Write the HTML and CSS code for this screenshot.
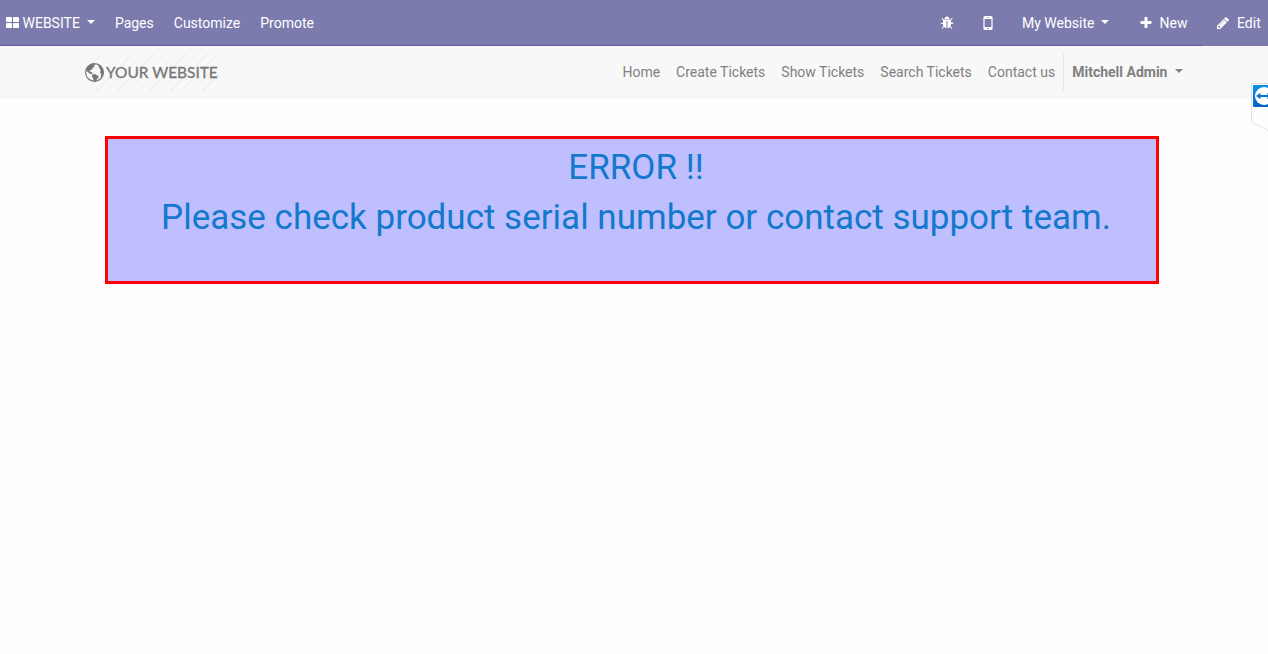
FILE: index.html
```html
<!DOCTYPE html>
<html lang="en">
<head>
<meta charset="utf-8">
<title>Your Website</title>
<link rel="stylesheet" href="styles.css">
</head>
<body>
<nav class="topbar">
  <ul class="menu">
    <li class="menu-item brand"><svg class="icon-grid" viewBox="0 0 13 11"><rect width="6" height="5" rx=".8"/><rect x="7" width="6" height="5" rx=".8"/><rect y="6" width="6" height="5" rx=".8"/><rect x="7" y="6" width="6" height="5" rx=".8"/></svg>WEBSITE <span class="caret"></span></li>
    <li class="menu-item">Pages</li>
    <li class="menu-item">Customize</li>
    <li class="menu-item">Promote</li>
  </ul>
  <ul class="menu tools">
    <li class="menu-item bug"><svg class="icon" viewBox="0 0 1792 1792"><path d="M1696 960q0 26-19 45t-45 19h-224q0 171-67 290l208 209q19 19 19 45t-19 45q-18 19-45 19t-45-19l-198-197q-5 5-15 13t-42 28.500-65 36.500-82 29-97 13V640H832v896q-51 0-101.500-13.500t-87-33-66-39-43.500-32.500l-15-14-183 207q-20 21-48 21-24 0-43-16-19-18-20.500-44.500t15.500-46.500l202-227q-58-114-58-274H160q-26 0-45-19t-19-45 19-45 45-19h224V538L211 365q-19-19-19-45t19-45 45-19 45 19l173 173h844l173-173q19-19 45-19t45 19 19 45-19 45l-173 173v294h224q26 0 45 19t19 45zm-480-576H576q0-133 93.500-226.500T896 64t226.500 93.500T1216 384z"/></svg></li>
    <li class="menu-item mobile"><svg class="icon-mobile" viewBox="0 0 10 14"><path fill-rule="evenodd" d="M2 0h6a1.600 1.600 0 0 1 1.600 1.600v10.800A1.600 1.600 0 0 1 8 14H2a1.600 1.600 0 0 1-1.600-1.600V1.600A1.600 1.600 0 0 1 2 0zm-.4 2.900v8h6.800v-8zM3.800 1.200v.5h2.400v-.5zM5 11.700a.8.8 0 1 0 0 1.600.8.8 0 0 0 0-1.600z"/></svg></li>
    <li class="menu-item site">My Website <span class="caret"></span></li>
    <li class="menu-item new"><svg class="icon" viewBox="0 0 1792 1792"><path d="M1600 736v192q0 40-28 68t-68 28h-416v416q0 40-28 68t-68 28H800q-40 0-68-28t-28-68v-416H288q-40 0-68-28t-28-68V736q0-40 28-68t68-28h416V224q0-40 28-68t68-28h192q40 0 68 28t28 68v416h416q40 0 68 28t28 68z"/></svg>New</li>
    <li class="menu-item edit"><svg class="icon" viewBox="0 0 1792 1792"><path d="M491 1536l91-91-235-235-91 91v107h128v128h107zm523-928q0-22-22-22-10 0-17 7l-542 542q-7 7-7 17 0 22 22 22 10 0 17-7l542-542q7-7 7-17zm-54-192l416 416-832 832H128v-416zm683 96q0 53-37 90l-166 166-416-416 166-165q36-38 90-38 53 0 91 38l235 234q37 39 37 91z"/></svg>Edit</li>
  </ul>
</nav>
<header class="header">
  <div class="logo">
    <svg class="globe" viewBox="1 1 18 18"><circle cx="10" cy="10" r="8.400" fill="none" stroke="currentColor" stroke-width="1.100"/><path d="M3 4.500 6.500 2 10 1.500l.8 1.300-1.600.8 1 1.200-2 .8-.6 1.800-1.700.3-.8 1.400 1.700.2 1.500 1.500-.9.800-2.500-.9L3 8.900l-.6-2zM12.500 2l2.500.8 3 3.700.7 4-1.200 3.800-1.500.5.300-2.800-1-2.500.5-2.200-1.500-1.800-.3-1.500zM8 11.800l2.200-.4 3.500 1.800.3 1.400-1.800 1.700-1 2.300-1.900.1-.5-3.200-1.300-1.700z"/></svg>
    <span class="logo-text">YOUR WEBSITE</span>
  </div>
  <ul class="links">
    <li>Home</li>
    <li>Create Tickets</li>
    <li>Show Tickets</li>
    <li>Search Tickets</li>
    <li>Contact us</li>
    <li class="user">Mitchell Admin <span class="caret"></span></li>
  </ul>
</header>
<main class="content">
  <section class="error">
    <h1>ERROR !!</h1>
    <h1>Please check product serial number or contact support team.</h1>
  </section>
</main>
<svg class="remote-tab" viewBox="0 0 18 49"><defs><linearGradient id="tab-blue" x1="0" y1="0" x2="0" y2="1"><stop offset="0" stop-color="#1190ea"/><stop offset="1" stop-color="#0562c4"/></linearGradient></defs><path d="M20 .5H3.500Q1.500.5 1.500 3v34q0 2 2 3L20 48.500" fill="#fefefe" stroke="#dcdfe5"/><rect x="3" y="2" width="22" height="22" rx="1" fill="url(#tab-blue)"/><circle cx="14" cy="13" r="9" fill="#fff"/><path d="M6 13l4.500-3.200v2.300h7V9.800L22 13l-4.500 3.200v-2.300h-7v2.300z" fill="#0b73d2"/></svg>
</body>
</html>
```
FILE: styles.css
```css
* { box-sizing: border-box; }
body {
  margin: 0;
  height: 654px;
  overflow: hidden;
  background: #fefefe;
  font: 14px/21px Roboto, sans-serif;
}
ul { display: flex; margin: 0; padding: 0; list-style: none; }
.topbar {
  display: flex;
  justify-content: space-between;
  height: 46px;
  background: #7c7bad;
  border-bottom: 1px solid #5f5e97;
  color: #fff;
}
.menu-item {
  height: 46px;
  padding: 0 10px;
  line-height: 46px;
  white-space: nowrap;
}
.brand { padding-left: 6px; }
.icon-grid { width: 13px; height: 11px; margin-right: 3.500px; fill: #fff; vertical-align: 0; }
.icon { width: 14px; height: 14px; fill: #fff; vertical-align: -2px; }
.icon-mobile { width: 10px; height: 14px; fill: #fff; vertical-align: -2px; }
.caret {
  display: inline-block;
  margin-left: 3.570px;
  vertical-align: 3.570px;
  border: 4.200px solid transparent;
  border-top-color: currentColor;
  border-bottom: 0;
}
.bug { width: 43px; }
.mobile { width: 39px; }
.site { width: 117px; }
.new { width: 73px; }
.new .icon, .edit .icon { margin-right: 6.500px; }
.edit .icon { margin-right: 7px; }
.edit { width: 66px; padding-left: 14px; background: #7c7bad; }
.header {
  display: flex;
  justify-content: space-between;
  align-items: center;
  height: 53px;
  padding: 0 77.500px 0 81px;
  background: #f8f8f8;
  color: #808080;
}
.logo {
  display: flex;
  align-items: center;
  width: 139px;
  height: 37px;
  padding-left: 4px;
  color: #767676;
  background: repeating-linear-gradient(135deg, transparent 0 6.500px, #efefef 6.500px 7.500px);
}
.globe { flex: none; width: 19px; height: 19px; margin-right: 2px; fill: currentColor; }
.logo-text {
  padding-bottom: 1px;
  font: 400 15.450px/20px Lato, sans-serif;
  white-space: nowrap;
  -webkit-text-stroke: .3px currentColor;
}
.links li { padding: 8px; white-space: nowrap; }
.links .user { border-left: 1px solid #e6e6e6; font-weight: 700; }
.content { padding: 37px 109px 0 105px; }
.error {
  height: 148px;
  padding: 8px 0 0 8px;
  background: #bfbfff;
  border: 3px solid #f00;
  color: #1279cc;
  text-align: center;
}
.error h1 { margin: 0 0 8px; font-size: 35px; font-weight: 400; line-height: 42px; }
.remote-tab { position: absolute; top: 83px; right: 0; width: 18px; height: 49px; }
```
